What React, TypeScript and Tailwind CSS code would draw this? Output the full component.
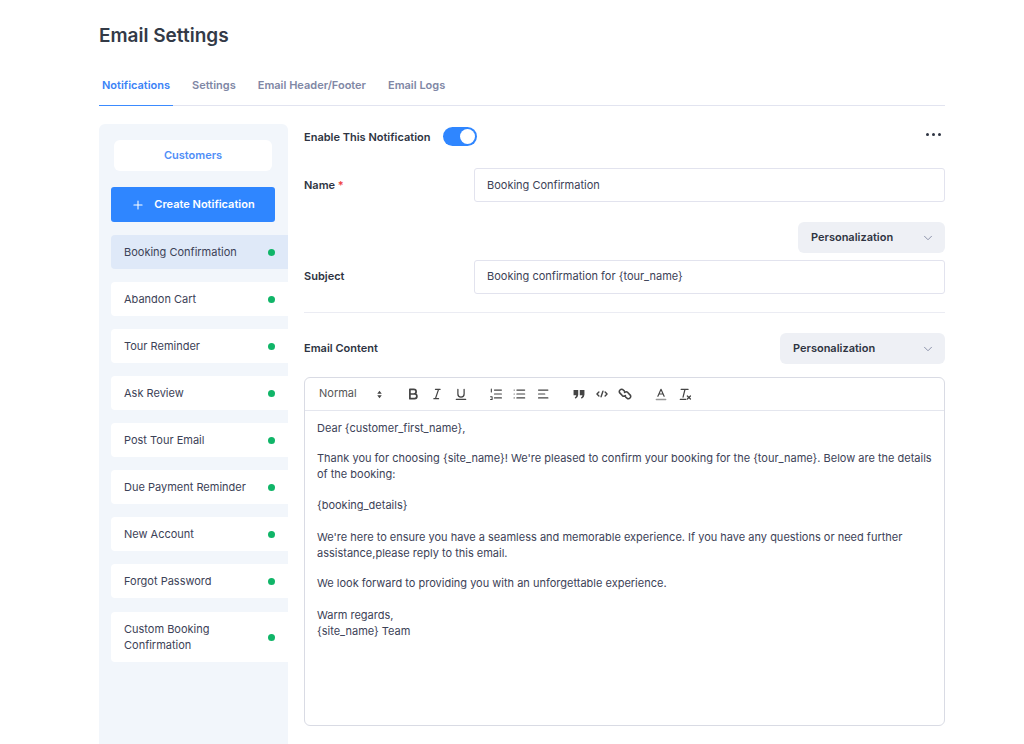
import React from "react";
import { ChevronDown, Plus } from "lucide-react";

const notifications = [
  "Booking Confirmation",
  "Abandon Cart",
  "Tour Reminder",
  "Ask Review",
  "Post Tour Email",
  "Due Payment Reminder",
  "New Account",
  "Forgot Password",
  "Custom Booking Confirmation",
];

function ToolIcon({ children }: { children: React.ReactNode }) {
  return (
    <svg viewBox="0 0 18 18" fill="none" stroke="#444" strokeWidth="1.6" strokeLinecap="round" strokeLinejoin="round" className="h-[14px] w-[14px]">
      {children}
    </svg>
  );
}

function Toolbar() {
  return (
    <div className="flex h-[33px] items-center border-b border-[#e4e6ee] pl-[14px]">
      <span className="mb-[2px] w-[57px] text-[11px] text-[#555]">Normal</span>
      <svg viewBox="0 0 8 12" className="mr-[23px] h-[9px] w-[7px]" fill="#444">
        <path d="M4 1 7 5H1zM4 11 1 7h6z" />
      </svg>
      <div className="flex items-center gap-[10px]">
        <ToolIcon>
          <path d="M5 3h5a3 3 0 0 1 0 6H5zM5 9h6a3 3 0 0 1 0 6H5z" strokeWidth="2.200" />
        </ToolIcon>
        <ToolIcon>
          <path d="M7 3h6M5 15h6M11 3 7 15" />
        </ToolIcon>
        <ToolIcon>
          <path d="M5 3v6a4 4 0 0 0 8 0V3M3 16h12" />
        </ToolIcon>
      </div>
      <div className="ml-[21px] flex items-center gap-[10px]">
        <ToolIcon>
          <path d="M7 4h9M7 9h9M7 14h9M3 2.500v4M2 12.500h2v3.500H2" strokeWidth="1.400" />
        </ToolIcon>
        <ToolIcon>
          <path d="M5 4h10M5 9h10M5 14h10M1.500 4h.01M1.500 9h.01M1.500 14h.01" strokeWidth="1.500" />
        </ToolIcon>
        <ToolIcon>
          <path d="M2 4h12M2 9h8M2 14h12" strokeWidth="1.500" />
        </ToolIcon>
      </div>
      <div className="ml-[21px] flex items-center gap-[9px]">
        <svg viewBox="0 0 18 18" fill="#444" className="h-[14px] w-[14px]">
          <path d="M2 4h6v6q0 3-3.500 5l-1-1.500q2-1 2-3H2zM10 4h6v6q0 3-3.500 5l-1-1.500q2-1 2-3h-3.500z" />
        </svg>
        <ToolIcon>
          <path d="M5 6.500 2.500 9 5 11.500M13 6.500 15.500 9 13 11.500M10.200 5.500l-2.400 7" strokeWidth="1.800" />
        </ToolIcon>
        <ToolIcon>
          <path d="M8 5 6 3.200a3 3 0 0 0-4 4L5.500 11a3 3 0 0 0 4 0M10 13l2 1.800a3 3 0 0 0 4-4L12.500 7a3 3 0 0 0-4 0" strokeWidth="2" />
        </ToolIcon>
      </div>
      <div className="ml-[22px] flex items-center gap-[10px]">
        <ToolIcon>
          <path d="M5 12 9 3l4 9M6.500 9h5" strokeWidth="1.500" />
          <path d="M3 16h12" stroke="#999" strokeWidth="1.800" />
        </ToolIcon>
        <ToolIcon>
          <path d="M4 3h9M9 3 6.500 13M3 16h7M12 11.500l4 4M16 11.500l-4 4" strokeWidth="1.600" />
        </ToolIcon>
      </div>
    </div>
  );
}

export default function App() {
  return (
    <div className="h-[744px] overflow-hidden bg-white pl-[99px] pr-[79px] font-['Inter',sans-serif]">
      <h1 className="pt-[24px] text-[19px] leading-[24px] font-semibold text-[#333a47]">Email Settings</h1>

      {/* Tabs */}
      <div className="mt-[22px] flex h-[36px] gap-[22px] border-b border-[#e2e4f0] text-[11px] font-semibold text-[#8087a5]">
        <div className="-mb-px border-b border-[#3b8bff] px-[3px] pt-[7px] text-[#3b82f6]">Notifications</div>
        <div className="-ml-[3px] pt-[7px]">Settings</div>
        <div className="pt-[7px]">Email Header/Footer</div>
        <div className="pt-[7px]">Email Logs</div>
      </div>

      <div className="mt-[18px] flex gap-[16px]">
        {/* Sidebar */}
        <aside className="h-[640px] w-[189px] shrink-0 rounded-t-[6px] bg-[#f2f6fb] pl-[12px] pt-[16px]">
          <div className="ml-[3px] flex h-[31px] w-[158px] items-center justify-center rounded-[6px] bg-white text-[11px] font-semibold text-[#4f8ef7]">
            Customers
          </div>
          <button className="mt-[16px] flex h-[35px] w-[164px] items-center justify-center gap-[9px] rounded-[3px] bg-[#2f86ff] text-[11px] font-semibold text-white">
            <Plus className="h-[14px] w-[14px]" strokeWidth={1.8} />
            Create Notification
          </button>
          <div className="mt-[13px] flex flex-col gap-[13px]">
            {notifications.map((name, i) => (
              <div
                key={name}
                className={`flex items-center justify-between rounded-l-[4px] py-[9px] pl-[13px] pr-[13px] text-[11px] leading-[16px] text-[#3c4257] ${i === 0 ? "bg-[#dfe9f8]" : "bg-white"} ${i === 8 ? "mt-px" : ""}`}
              >
                <span className={i === 8 ? "w-[110px]" : ""}>{name}</span>
                <span className="h-[7px] w-[7px] rounded-full bg-[#10b568]" />
              </div>
            ))}
          </div>
        </aside>

        {/* Main */}
        <main className="min-w-0 flex-1 text-[#2e3442]">
          <div className="flex h-[24px] items-center">
            <span className="mt-[2px] text-[11px] font-semibold">Enable This Notification</span>
            <span className="ml-[13px] flex h-[19px] w-[34px] items-center justify-end rounded-full bg-[#2f86ff] pr-[2px]">
              <span className="h-[15px] w-[15px] rounded-full bg-white" />
            </span>
            <span className="ml-auto mb-[3px] flex gap-[3px] pr-[4px]">
              <span className="h-[3px] w-[3px] rounded-full bg-[#2e3442]" />
              <span className="h-[3px] w-[3px] rounded-full bg-[#2e3442]" />
              <span className="h-[3px] w-[3px] rounded-full bg-[#2e3442]" />
            </span>
          </div>

          <div className="mt-[20px] flex items-center">
            <label className="w-[170px] text-[11px] font-semibold">
              Name <span className="text-[#ef4444]">*</span>
            </label>
            <div className="flex h-[34px] flex-1 items-center rounded-[3px] border border-[#e2e3ee] pl-[12px] text-[11px] text-[#3c4257]">
              Booking Confirmation
            </div>
          </div>

          <div className="mt-[20px] flex justify-end">
            <div className="flex h-[31px] w-[147px] items-center justify-between rounded-[6px] bg-[#eef0f5] pl-[13px] pr-[10px] text-[11px] font-semibold">
              Personalization
              <ChevronDown className="h-[14px] w-[14px] text-[#7f86a0]" strokeWidth={1.5} />
            </div>
          </div>

          <div className="mt-[7px] flex items-center">
            <label className="w-[170px] pb-[2px] text-[11px] font-semibold">Subject</label>
            <div className="flex h-[34px] flex-1 items-center rounded-[3px] border border-[#e2e3ee] pb-[2px] pl-[12px] text-[11px] text-[#3c4257]">
              {"Booking confirmation for {tour_name}"}
            </div>
          </div>

          <div className="mt-[18px] border-t border-[#ebecf3]" />

          <div className="mt-[20px] flex items-center justify-between">
            <span className="text-[11px] font-semibold">Email Content</span>
            <div className="flex h-[31px] w-[165px] items-center justify-between rounded-[6px] bg-[#eef0f5] pl-[13px] pr-[10px] text-[11px] font-semibold">
              Personalization
              <ChevronDown className="h-[14px] w-[14px] text-[#7f86a0]" strokeWidth={1.5} />
            </div>
          </div>

          {/* Editor */}
          <div className="mt-[13px] h-[349px] rounded-[6px] border border-[#d9dbe4]">
            <Toolbar />
            <div className="px-[12px] pt-[9px] text-[11px] leading-[16px] text-[#3c4257]">
              <p>{"Dear {customer_first_name},"}</p>
              <p className="mt-[14px]">
                {"Thank you for choosing {site_name}! We're pleased to confirm your booking for the {tour_name}. Below are the details of the booking:"}
              </p>
              <p className="mt-[15px]">{"{booking_details}"}</p>
              <p className="mt-[16px]">
                We're here to ensure you have a seamless and memorable experience. If you have any questions or need further assistance,please reply to this email.
              </p>
              <p className="mt-[14px]">We look forward to providing you with an unforgettable experience.</p>
              <p className="mt-[16px]">Warm regards,</p>
              <p>{"{site_name} Team"}</p>
            </div>
          </div>
        </main>
      </div>
    </div>
  );
}
